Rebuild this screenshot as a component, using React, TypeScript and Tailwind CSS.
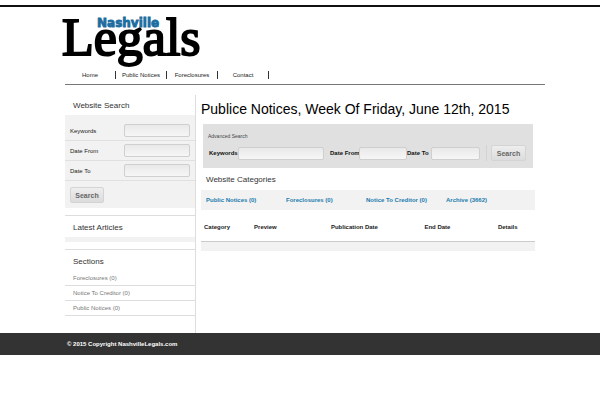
const NAV_ITEMS = ["Home", "Public Notices", "Foreclosures", "Contact"];

const SEARCH_FIELDS = [
  { id: "keywords", label: "Keywords" },
  { id: "date-from", label: "Date From" },
  { id: "date-to", label: "Date To" },
];

const SECTIONS = ["Foreclosures (0)", "Notice To Creditor (0)", "Public Notices (0)"];

const CATEGORIES = [
  "Public Notices (0)",
  "Foreclosures (0)",
  "Notice To Creditor (0)",
  "Archive (3662)",
];

const COLUMNS = [
  { title: "Category", width: "w-[15%]" },
  { title: "Preview", width: "w-[23%]" },
  { title: "Publication Date", width: "w-[28%]" },
  { title: "End Date", width: "w-[22%]" },
  { title: "Details", width: "w-[12%]" },
];

const inputStyle =
  "h-[13px] rounded-xs border border-[#cfcfcf] bg-linear-to-b from-[#e9e9e9] to-[#f6f6f6] px-1 text-[6px] outline-none";

const buttonStyle =
  "h-4 rounded-xs border border-[#d4d4d4] bg-linear-to-b from-[#eeeeee] to-[#dcdcdc] text-[7px] leading-none font-bold text-[#666]";

function Logo() {
  return (
    <a href="#" aria-label="Nashville Legals" className="-ml-1 block h-[52px] w-36">
      <svg viewBox="0 0 144 60" className="block w-full overflow-visible">
        <text
          x="1"
          y="40"
          fontFamily="'Liberation Serif', serif"
          fontSize="52"
          stroke="#000"
          strokeWidth="2"
        >
          Legals
        </text>
        <text
          x="36"
          y="12"
          fontFamily="'DejaVu Sans', sans-serif"
          fontSize="12"
          fontWeight="bold"
          fill="#1b6c9f"
          stroke="#1b6c9f"
          strokeWidth="0.8"
        >
          Nashville
        </text>
      </svg>
    </a>
  );
}

function Header() {
  return (
    <header className="border-b border-[#777] pt-2">
      <Logo />
      <nav className="mt-1 flex pb-1">
        {NAV_ITEMS.map((item) => (
          <a
            key={item}
            href="#"
            className="mb-px flex h-2 w-[51px] items-center justify-center border-r border-[#333] text-[6px] leading-none whitespace-nowrap text-[#222]"
          >
            {item}
          </a>
        ))}
      </nav>
    </header>
  );
}

function Sidebar() {
  return (
    <aside className="w-[131px] shrink-0 border-r border-[#ddd]">
      <h2 className="px-2 pt-[3px] pb-px text-[8px] leading-4 text-[#333]">Website Search</h2>
      <form className="bg-[#f2f2f2] pb-[5px]">
        {SEARCH_FIELDS.map(({ id, label }) => (
          <div
            key={id}
            className="flex items-center justify-between border-b border-[#e0e0e0] px-[5px] py-[3px] first:pt-[9px]"
          >
            <label htmlFor={id} className="text-[6px] leading-none text-[#222]">
              {label}
            </label>
            <input id={id} type="text" className={`${inputStyle} w-[66px]`} />
          </div>
        ))}
        <button type="button" className={`${buttonStyle} mt-[6px] ml-[5px] block w-[34px]`}>
          Search
        </button>
      </form>

      <section className="mt-[7px] border-t border-[#ddd]">
        <h2 className="px-2 pt-1 pb-px text-[8px] leading-4 text-[#333]">Latest Articles</h2>
        <div className="h-[5px] bg-[#f2f2f2]" />
      </section>

      <section className="mt-[7px] border-t border-[#ddd]">
        <h2 className="px-2 pt-1 pb-px text-[8px] leading-4 text-[#333]">Sections</h2>
        <ul>
          {SECTIONS.map((section) => (
            <li key={section} className="border-b border-[#ddd] px-2 text-[6px] leading-[14px]">
              <a href="#" className="block text-[#777]">
                {section}
              </a>
            </li>
          ))}
        </ul>
      </section>
    </aside>
  );
}

function AdvancedSearch() {
  return (
    <form className="mx-0.5 h-11 bg-[#e0e0e0] px-[5px] pt-[9px]">
      <h3 className="text-[5px] leading-[6px] text-[#444]">Advanced Search</h3>
      <div className="mt-1.5 flex items-center text-[6px] leading-none font-bold text-[#111]">
        <label htmlFor="adv-keywords" className="w-[30px] pl-px">
          Keywords
        </label>
        <input id="adv-keywords" type="text" className={`${inputStyle} w-[86px]`} />
        <label htmlFor="adv-from" className="ml-[6px] w-[29px] whitespace-nowrap">
          Date From
        </label>
        <input id="adv-from" type="text" className={`${inputStyle} w-12`} />
        <label htmlFor="adv-to" className="w-6 whitespace-nowrap">
          Date To
        </label>
        <input id="adv-to" type="text" className={`${inputStyle} w-[49px]`} />
        <div className="ml-[6px] h-4 border-l border-[#d2d2d2] pl-1">
          <button type="button" className={`${buttonStyle} block w-[35px]`}>
            Search
          </button>
        </div>
      </div>
    </form>
  );
}

function NoticesTable() {
  return (
    <table className="w-full table-fixed">
      <thead>
        <tr className="h-[31px] border-b border-[#ccc]">
          {COLUMNS.map(({ title, width }) => (
            <th
              key={title}
              scope="col"
              className={`${width} pt-1.5 pb-0.5 pl-[3px] text-left text-[6px] leading-2 whitespace-nowrap text-[#222]`}
            >
              {title}
            </th>
          ))}
        </tr>
      </thead>
      <tbody>
        <tr className="h-2.5 bg-[#f2f2f2]">
          <td colSpan={COLUMNS.length} />
        </tr>
      </tbody>
    </table>
  );
}

export default function App() {
  return (
    <div className="bg-white pt-[5px] font-['Liberation_Sans',Arial,sans-serif]">
      <div className="border-t-2 border-[#111]">
        <div className="mx-auto max-w-[490px] pl-2.5">
          <Header />
          <div className="flex pt-2.5">
            <Sidebar />
            <main className="min-w-0 flex-1 pr-2.5 pb-[82px] pl-[5px]">
              <h1 className="pt-1 pb-[5px] text-[14px] leading-5 text-black">
                Publice Notices, Week Of Friday, June 12th, 2015
              </h1>
              <AdvancedSearch />
              <h2 className="px-[5px] pt-1 pb-0.5 text-[8px] leading-4 text-[#333]">
                Website Categories
              </h2>
              <ul className="flex h-5 items-center bg-[#f2f2f2] pl-[5px]">
                {CATEGORIES.map((category) => (
                  <li key={category} className="w-20 text-[6px] leading-none font-bold">
                    <a href="#" className="whitespace-nowrap text-[#1b7cae]">
                      {category}
                    </a>
                  </li>
                ))}
              </ul>
              <NoticesTable />
            </main>
          </div>
        </div>
        <footer className="bg-[#333] text-[6px] leading-[22px] font-bold text-white">
          <div className="mx-auto max-w-[490px] pl-3">© 2015 Copyright NashvilleLegals.com</div>
        </footer>
      </div>
    </div>
  );
}
